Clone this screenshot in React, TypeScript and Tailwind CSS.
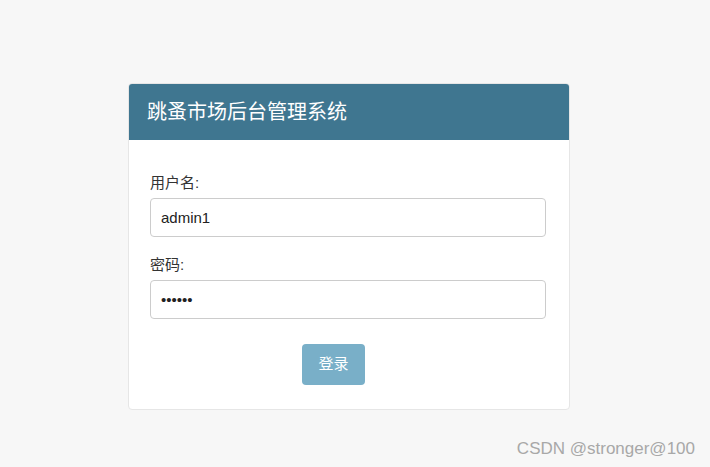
export default function App() {
  return (
    <div
      className="relative w-[710px] h-[467px] bg-[#f7f7f7] overflow-hidden"
      style={{ fontFamily: '"Liberation Sans", "Noto Sans CJK SC", sans-serif' }}
    >
      <div className="pt-[83px] pl-[128px]">
        <div className="w-[442px] bg-white border border-[#e6e6e6] rounded-[4px] overflow-hidden">
          <div className="h-[56px] bg-[#3f7690] flex items-center px-[18px]">
            <h1 className="text-[20px] text-white font-normal">跳蚤市场后台管理系统</h1>
          </div>
          <form className="px-[21px] pt-[33px] pb-[24px] flex flex-col">
            <label className="text-[15px] leading-[20px] text-[#333] mb-[5px]">用户名:</label>
            <input
              type="text"
              defaultValue="admin1"
              className="h-[39px] w-[396px] border border-[#cccccc] rounded-[4px] px-[10px] text-[15px] text-[#222] outline-none"
            />
            <label className="text-[15px] leading-[20px] text-[#333] mt-[18px] mb-[5px]">密码:</label>
            <input
              type="password"
              defaultValue="123456"
              className="h-[39px] w-[396px] border border-[#cccccc] rounded-[4px] px-[10px] text-[15px] text-[#222] outline-none"
            />
            <div className="flex mt-[25px] pl-[152px]">
              <button
                type="button"
                className="w-[63px] h-[41px] bg-[#79afc8] text-white text-[15px] rounded-[4px]"
              >
                登录
              </button>
            </div>
          </form>
        </div>
      </div>
      <div className="absolute right-[15px] top-[436px] text-[17px] text-[#a8a8a8]">
        CSDN @stronger@100
      </div>
    </div>
  );
}
